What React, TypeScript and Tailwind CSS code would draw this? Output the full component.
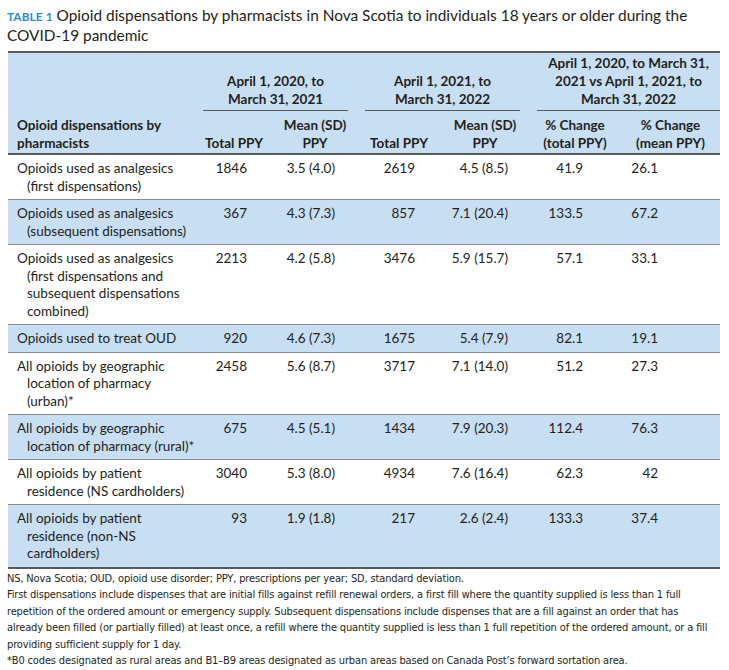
import React from "react";

type Row = {
  label: string[];
  total1: string;
  mean1: string;
  total2: string;
  mean2: string;
  pctTotal: string;
  pctMean: string;
  shaded: boolean;
};

const rows: Row[] = [
  {
    label: ["Opioids used as analgesics", "(first dispensations)"],
    total1: "1846",
    mean1: "3.5 (4.0)",
    total2: "2619",
    mean2: "4.5 (8.5)",
    pctTotal: "41.9",
    pctMean: "26.1",
    shaded: false,
  },
  {
    label: ["Opioids used as analgesics", "(subsequent dispensations)"],
    total1: "367",
    mean1: "4.3 (7.3)",
    total2: "857",
    mean2: "7.1 (20.4)",
    pctTotal: "133.5",
    pctMean: "67.2",
    shaded: true,
  },
  {
    label: [
      "Opioids used as analgesics",
      "(first dispensations and",
      "subsequent dispensations",
      "combined)",
    ],
    total1: "2213",
    mean1: "4.2 (5.8)",
    total2: "3476",
    mean2: "5.9 (15.7)",
    pctTotal: "57.1",
    pctMean: "33.1",
    shaded: false,
  },
  {
    label: ["Opioids used to treat OUD"],
    total1: "920",
    mean1: "4.6 (7.3)",
    total2: "1675",
    mean2: "5.4 (7.9)",
    pctTotal: "82.1",
    pctMean: "19.1",
    shaded: true,
  },
  {
    label: ["All opioids by geographic", "location of pharmacy", "(urban)*"],
    total1: "2458",
    mean1: "5.6 (8.7)",
    total2: "3717",
    mean2: "7.1 (14.0)",
    pctTotal: "51.2",
    pctMean: "27.3",
    shaded: false,
  },
  {
    label: ["All opioids by geographic", "location of pharmacy (rural)*"],
    total1: "675",
    mean1: "4.5 (5.1)",
    total2: "1434",
    mean2: "7.9 (20.3)",
    pctTotal: "112.4",
    pctMean: "76.3",
    shaded: true,
  },
  {
    label: ["All opioids by patient", "residence (NS cardholders)"],
    total1: "3040",
    mean1: "5.3 (8.0)",
    total2: "4934",
    mean2: "7.6 (16.4)",
    pctTotal: "62.3",
    pctMean: "42",
    shaded: false,
  },
  {
    label: ["All opioids by patient", "residence (non-NS", "cardholders)"],
    total1: "93",
    mean1: "1.9 (1.8)",
    total2: "217",
    mean2: "2.6 (2.4)",
    pctTotal: "133.3",
    pctMean: "37.4",
    shaded: true,
  },
];

const font = { fontFamily: "Lato, 'Noto Sans', sans-serif" };

export default function App() {
  return (
    <div className="w-[729px] h-[670px] overflow-hidden bg-white text-[#231f20]" style={font}>
      {/* Title */}
      <div className="px-[7px] pt-[6px] text-[15.4px] leading-[18px] whitespace-nowrap">
        <span className="text-[12px] font-bold text-[#2a8fd0]">TABLE 1</span>{" "}
        Opioid dispensations by pharmacists in Nova Scotia to individuals 18 years or older during the
        <br />
        COVID-19 pandemic
      </div>

      <table className="ml-[8px] mt-[7px] w-[712px] table-fixed border-collapse text-[13.5px]">
        <colgroup>
          <col className="w-[187px]" />
          <col className="w-[78px]" />
          <col className="w-[84px]" />
          <col className="w-[84px]" />
          <col className="w-[88px]" />
          <col className="w-[92px]" />
          <col className="w-[99px]" />
        </colgroup>
        <thead className="bg-[#c8def2] font-bold leading-[18px] whitespace-nowrap">
          <tr className="border-t-2 border-[#5a5a5a]">
            <th rowSpan={2} className="pl-[9px] pb-[1px] text-left align-bottom font-bold">
              Opioid dispensations by
              <br />
              pharmacists
            </th>
            <th colSpan={2} className="p-0 pt-[1px] align-bottom font-bold">
              <div className="ml-[8px] mr-[9px] border-b border-[#5a5a5a] pb-[2px] text-center">
                April 1, 2020, to
                <br />
                March 31, 2021
              </div>
            </th>
            <th colSpan={2} className="p-0 pt-[1px] align-bottom font-bold">
              <div className="ml-[8px] mr-[9px] border-b border-[#5a5a5a] pb-[2px] text-center">
                April 1, 2021, to
                <br />
                March 31, 2022
              </div>
            </th>
            <th colSpan={2} className="p-0 pt-[1px] align-bottom font-bold">
              <div className="ml-[8px] border-b border-[#5a5a5a] pb-[2px] text-center">
                April 1, 2020, to March 31,
                <br />
                2021 vs April 1, 2021, to
                <br />
                March 31, 2022
              </div>
            </th>
          </tr>
          <tr className="border-b-2 border-[#5a5a5a]">
            <th className="pt-[5px] pb-[1px] text-center align-bottom font-bold">Total PPY</th>
            <th className="pt-[5px] pb-[1px] text-center align-bottom font-bold">
              Mean (SD)
              <br />
              PPY
            </th>
            <th className="pt-[5px] pb-[1px] text-center align-bottom font-bold">Total PPY</th>
            <th className="pt-[5px] pb-[1px] text-center align-bottom font-bold">
              Mean (SD)
              <br />
              PPY
            </th>
            <th className="pt-[5px] pb-[1px] text-center align-bottom font-bold">
              % Change
              <br />
              (total PPY)
            </th>
            <th className="pt-[5px] pb-[1px] text-center align-bottom font-bold">
              % Change
              <br />
              (mean PPY)
            </th>
          </tr>
        </thead>
        <tbody className="leading-[17.5px] whitespace-nowrap">
          {rows.map((r, i) => (
            <tr
              key={i}
              className={`${r.shaded ? "bg-[#c8def2]" : "bg-white"} ${
                i === rows.length - 1 ? "border-b-2 border-[#5a5a5a]" : "border-b border-[#8a8a8a]"
              }`}
            >
              <td className="pt-[5px] pb-[4px] pl-[19px] -indent-[10px] align-top">
                {r.label.map((l, j) => (
                  <React.Fragment key={j}>
                    {j > 0 && <br />}
                    {l}
                  </React.Fragment>
                ))}
              </td>
              <td className="pt-[5px] pb-[4px] pr-[26px] text-right align-top">{r.total1}</td>
              <td className="pt-[5px] pb-[4px] pr-[22px] text-right align-top">{r.mean1}</td>
              <td className="pt-[5px] pb-[4px] pr-[26px] text-right align-top">{r.total2}</td>
              <td className="pt-[5px] pb-[4px] pr-[21px] text-right align-top">{r.mean2}</td>
              <td className="pt-[5px] pb-[4px] pr-[38px] text-right align-top">{r.pctTotal}</td>
              <td className="pt-[5px] pb-[4px] pr-[62px] text-right align-top">{r.pctMean}</td>
            </tr>
          ))}
        </tbody>
      </table>

      {/* Footnotes */}
      <div
        className="px-[7px] pt-[2px] text-[11px] leading-[16.5px] tracking-[-0.15px] whitespace-nowrap"
        style={{ fontFamily: "'Liberation Sans Narrow', 'DejaVu Sans Condensed', Lato, sans-serif" }}
      >
        <div>NS, Nova Scotia; OUD, opioid use disorder; PPY, prescriptions per year; SD, standard deviation.</div>
        <div>
          First dispensations include dispenses that are initial fills against refill renewal orders, a first fill where the
          quantity supplied is less than 1 full
          <br />
          repetition of the ordered amount or emergency supply. Subsequent dispensations include dispenses that are a fill
          against an order that has
          <br />
          already been filled (or partially filled) at least once, a refill where the quantity supplied is less than 1 full
          repetition of the ordered amount, or a fill
          <br />
          providing sufficient supply for 1 day.
        </div>
        <div>
          *B0 codes designated as rural areas and B1–B9 areas designated as urban areas based on Canada Post’s forward
          sortation area.
        </div>
      </div>
    </div>
  );
}
